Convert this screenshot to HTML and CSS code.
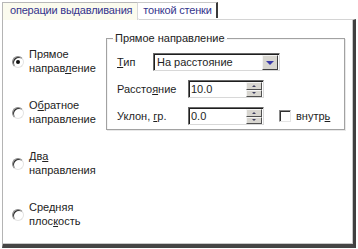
FILE: index.html
```html
<!DOCTYPE html>
<html>
<head>
<meta charset="utf-8">
<link rel="stylesheet" href="styles.css">
</head>
<body>
<div class="window">
  <div class="tabs">
    <div class="tab active">операции выдавливания</div>
    <div class="tab">тонкой стенки</div>
  </div>
  <div class="panel">
    <div class="modes">
      <div class="mode">
        <span class="radio checked"></span>
        <span class="mode-text">Прямое<br>направ<u>л</u>ение</span>
      </div>
      <div class="mode">
        <span class="radio"></span>
        <span class="mode-text">О<u>б</u>ратное<br>направление</span>
      </div>
      <div class="mode">
        <span class="radio"></span>
        <span class="mode-text">Дв<u>а</u><br>направления</span>
      </div>
      <div class="mode">
        <span class="radio"></span>
        <span class="mode-text">Средняя<br>плос<u>к</u>ость</span>
      </div>
    </div>
    <fieldset class="group">
      <legend class="group-title">Прямое направление</legend>
      <div class="row">
        <span class="label short"><u>Т</u>ип</span>
        <div class="select">
          <span class="select-value">На расстояние</span>
          <span class="drop-btn"><span class="drop-arrow"></span></span>
        </div>
      </div>
      <div class="row">
        <span class="label long">Рассто<u>я</u>ние</span>
        <div class="spin">
          <span class="spin-value">10.0</span>
          <span class="spin-btns"><span class="spin-btn"><span class="arr up"></span></span><span class="spin-btn"><span class="arr down"></span></span></span>
        </div>
      </div>
      <div class="row">
        <span class="label long">Уклон, <u>г</u>р.</span>
        <div class="spin">
          <span class="spin-value">0.0</span>
          <span class="spin-btns"><span class="spin-btn"><span class="arr up"></span></span><span class="spin-btn"><span class="arr down"></span></span></span>
        </div>
        <span class="check"></span>
        <span class="check-label">внутр<u>ь</u></span>
      </div>
    </fieldset>
  </div>
</div>
</body>
</html>
```
FILE: styles.css
```css
* { box-sizing: border-box; }
html, body {
  margin: 0;
  padding: 0;
  background: #ffffff;
}
body {
  width: 358px;
  height: 249px;
  overflow: hidden;
  font-family: "Liberation Sans", Arial, sans-serif;
  font-size: 11px;
  color: #1e1e1e;
}
u { text-decoration: underline; text-underline-offset: 1px; }

.window {
  padding: 1px 2px 0 2px;
}
.tabs {
  display: flex;
  align-items: flex-end;
  height: 18px;
  position: relative;
  z-index: 1;
}
.tab {
  height: 16px;
  line-height: 14px;
  padding: 0 4px 0 5px;
  color: #34348c;
  font-size: 11px;
  letter-spacing: -0.2px;
  background: #ffffff;
  border-top: 1px solid #c8c8c8;
  border-right: 2px solid #3a3a3a;
  margin-bottom: 1px;
}
.tab.active {
  height: 18px;
  margin-bottom: -1px;
  line-height: 15px;
  background: #fbfbee;
  border-left: 1px solid #b8b8b8;
  border-top: 1px solid #b8b8b8;
  border-right: 1px solid #d8d8d8;
  padding: 0 5px 0 7px;
  box-shadow: 1px 0 0 #eeeeee;
}

.panel {
  display: flex;
  align-items: flex-start;
  height: 229px;
  border-left: 1px solid #b4b4b4;
  border-top: 1px solid #d4d4d4;
  border-right: 3px solid #404040;
  border-bottom: 4px solid #454545;
  box-shadow: inset -1px -1px 0 #c8c8c8;
  background: #ffffff;
}

.modes {
  width: 103px;
  flex: none;
  display: flex;
  flex-direction: column;
  gap: 23px;
  padding-top: 27px;
}
.mode {
  display: flex;
  align-items: center;
  line-height: 14px;
}
.mode-text {
  color: #222;
}
.radio {
  flex: none;
  width: 12px;
  height: 12px;
  margin: 2px 5px 0 9px;
  border-radius: 50%;
  border: 1px solid;
  border-color: #8a8a8a #e4e4e4 #e4e4e4 #8a8a8a;
  box-shadow: inset 1px 1px 0 #303030;
  background: #ffffff;
  display: flex;
  align-items: center;
  justify-content: center;
}
.radio.checked::after {
  content: "";
  width: 4px;
  height: 4px;
  border-radius: 50%;
  background: #111;
}

.group {
  flex: none;
  width: 239px;
  margin: 11px 0 0 0;
  padding: 8px 0 4px 10px;
  border: 1px solid #a2a2a2;
  box-shadow: 1px 1px 0 #e8e8e8, inset 1px 1px 0 #f4f4f4;
  min-width: 0;
}
.group-title {
  margin-left: -4px;
  padding: 0 2px;
  line-height: 14px;
  color: #222;
}
.row {
  display: flex;
  align-items: center;
  height: 18px;
  margin-bottom: 9px;
}
.row:last-child { margin-bottom: 0; }
.label { flex: none; }
.label.short { width: 36px; }
.label.long { width: 71px; }

.select {
  width: 127px;
  height: 18px;
  display: flex;
  align-items: stretch;
  border: 1px solid;
  border-color: #6a6a6a #d8d8d8 #d8d8d8 #6a6a6a;
  box-shadow: inset 1px 1px 0 #1e1e1e;
  background: #fff;
  padding: 1px 1px 0 2px;
}
.select-value {
  flex: 1;
  line-height: 15px;
  padding-left: 1px;
}
.drop-btn {
  width: 16px;
  flex: none;
  background: #d8d6d0;
  border: 1px solid;
  border-color: #f4f4f4 #404040 #404040 #f4f4f4;
  display: flex;
  align-items: center;
  justify-content: center;
}
.drop-arrow {
  width: 0;
  height: 0;
  border-left: 4px solid transparent;
  border-right: 4px solid transparent;
  border-top: 4px solid #3a3aa8;
}

.spin {
  width: 76px;
  height: 18px;
  display: flex;
  align-items: stretch;
  border: 1px solid;
  border-color: #6a6a6a #d8d8d8 #d8d8d8 #6a6a6a;
  box-shadow: inset 1px 1px 0 #1e1e1e;
  background: #fff;
  padding: 1px 1px 0 2px;
}
.spin-value {
  flex: 1;
  line-height: 15px;
}
.spin-btns {
  width: 16px;
  flex: none;
  display: flex;
  flex-direction: column;
}
.spin-btn {
  flex: 1;
  background: #d8d6d0;
  border: 1px solid;
  border-color: #f4f4f4 #505050 #505050 #f4f4f4;
  display: flex;
  align-items: center;
  justify-content: center;
}
.arr {
  width: 0;
  height: 0;
  border-left: 2px solid transparent;
  border-right: 2px solid transparent;
}
.arr.up { border-bottom: 2px solid #404060; }
.arr.down { border-top: 2px solid #404060; }

.check {
  flex: none;
  width: 12px;
  height: 12px;
  margin-left: 15px;
  border: 1px solid;
  border-color: #8a8a8a #e4e4e4 #e4e4e4 #8a8a8a;
  box-shadow: inset 1px 1px 0 #303030;
  background: #fff;
}
.check-label {
  margin-left: 5px;
}
```
